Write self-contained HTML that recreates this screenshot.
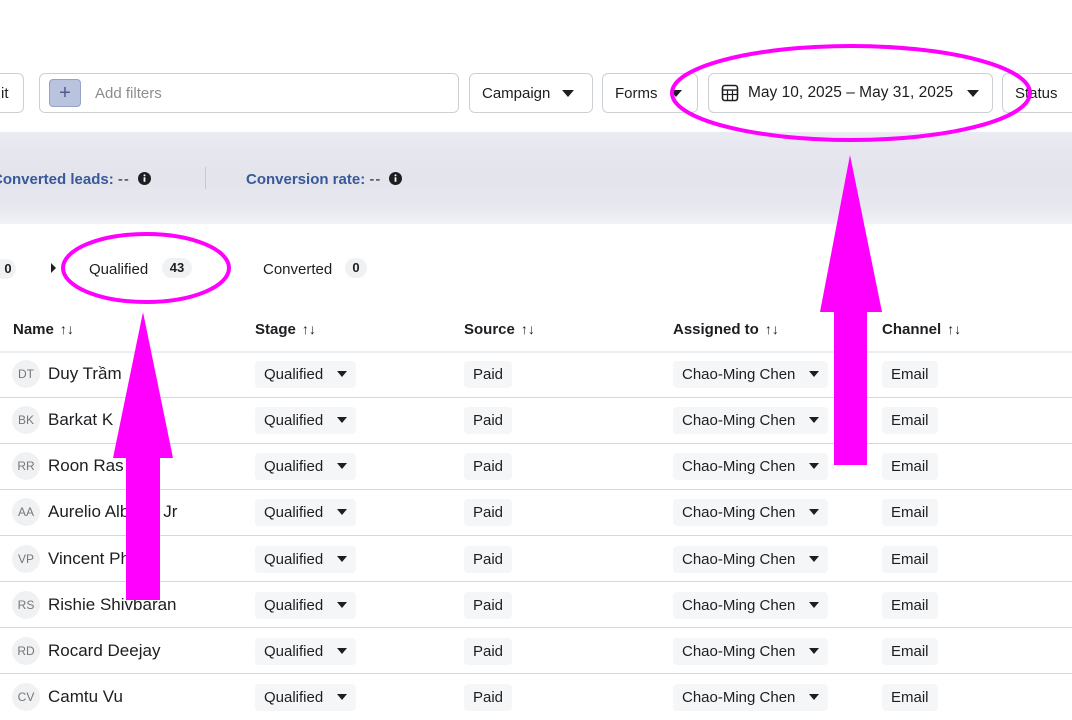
<!DOCTYPE html>
<html><head><meta charset="utf-8"><style>
*{box-sizing:border-box;margin:0;padding:0}
body{width:1072px;height:701px;overflow:hidden;background:#fff;font-family:"Liberation Sans",sans-serif;color:#1c1e21;position:relative}
.abs{position:absolute}
.btn{position:absolute;top:73px;height:40px;border:1px solid #ccd0d5;border-radius:6px;background:#fff;font-size:15px;color:#1c1e21;display:flex;align-items:center;padding:0 12px}
.tri{display:inline-block;width:0;height:0;border-left:6px solid transparent;border-right:6px solid transparent;border-top:7px solid #1c1e21;margin-left:12px}
.band{position:absolute;left:0;top:132px;width:1072px;height:92px;background:linear-gradient(180deg,#ebebf2 0,#e6e6ef 20%,#e3e4ec 50%,#e8e8f0 85%,#f1f1f6 100%)}
.stat{position:absolute;top:171px;font-size:15px;font-weight:bold;color:#385898}
.stat span{color:#1c1e21;font-weight:normal;letter-spacing:1px}
.stat svg{margin-left:8px;vertical-align:-1px}
.th{position:absolute;top:321px;font-size:15px;font-weight:bold}
.th i{font-style:normal;font-weight:normal;margin-left:6px;font-size:14px}
.line{position:absolute;left:0;width:1072px;height:1px;background:#d5d7da}
.row{position:absolute;left:0;width:1072px;height:46px}
.av{position:absolute;left:12px;top:9px;width:28px;height:28px;border-radius:50%;background:#f0f1f3;font-size:12px;color:#777;text-align:center;line-height:28px}
.nm{position:absolute;left:48px;top:13px;font-size:17px}
.pill{position:absolute;top:10px;height:27px;background:#f5f6f7;border-radius:4px;font-size:15px;line-height:28px;padding:0 9px}
.pill .tri{margin-left:14px;border-left-width:5px;border-right-width:5px;border-top-width:6px;vertical-align:2px}
</style></head><body>
<div class="btn" style="left:-10px;width:34px;padding-left:10px">it</div>
<div class="btn" style="left:39px;width:420px"><span style="display:inline-block;width:32px;height:28px;background:#b9c3de;border:1px solid #97a3c5;border-radius:4px;color:#4b5c8a;text-align:center;line-height:26px;font-size:20px;margin-left:-3px">+</span><span style="color:#8a8d91;margin-left:14px">Add filters</span></div>
<div class="btn" style="left:469px;width:124px">Campaign<span class="tri"></span></div>
<div class="btn" style="left:602px;width:96px">Forms<span class="tri"></span></div>
<div class="btn" style="left:708px;width:285px;font-size:15.5px">
<svg width="18" height="18" viewBox="0 0 18 18" style="margin-right:9px"><rect x="1.5" y="1.5" width="15" height="15" rx="2.5" fill="none" stroke="#1c1e21" stroke-width="1.6"/><line x1="1.5" y1="6" x2="16.5" y2="6" stroke="#1c1e21" stroke-width="1.4"/><line x1="1.5" y1="10.5" x2="16.5" y2="10.5" stroke="#1c1e21" stroke-width="1.2"/><line x1="6.5" y1="6" x2="6.5" y2="16.5" stroke="#1c1e21" stroke-width="1.2"/><line x1="11.5" y1="6" x2="11.5" y2="16.5" stroke="#1c1e21" stroke-width="1.2"/></svg>
May 10, 2025 – May 31, 2025<span class="tri" style="margin-left:14px"></span></div>
<div class="btn" style="left:1002px;width:90px">Status</div>

<div class="band"></div>
<div class="stat" style="left:-8px">Converted leads: <span>--</span><svg width="13" height="13" viewBox="0 0 13 13"><circle cx="6.5" cy="6.5" r="6.5" fill="#1c1e21"/><rect x="5.6" y="5.3" width="1.8" height="4.5" fill="#fff"/><circle cx="6.5" cy="3.4" r="1" fill="#fff"/></svg></div>
<div class="abs" style="left:205px;top:167px;width:1px;height:22px;background:#c8c9d0"></div>
<div class="stat" style="left:246px">Conversion rate: <span>--</span><svg width="13" height="13" viewBox="0 0 13 13"><circle cx="6.5" cy="6.5" r="6.5" fill="#1c1e21"/><rect x="5.6" y="5.3" width="1.8" height="4.5" fill="#fff"/><circle cx="6.5" cy="3.4" r="1" fill="#fff"/></svg></div>

<div class="abs" style="left:-6px;top:259px;width:22px;height:20px;border-radius:10px;background:#f0f1f3;font-size:13px;font-weight:bold;text-align:center;line-height:20px;padding-left:6px">0</div>
<div class="abs" style="left:51px;top:263px;width:0;height:0;border-top:5px solid transparent;border-bottom:5px solid transparent;border-left:5px solid #1c1e21"></div>
<div class="abs" style="left:89px;top:261px;font-size:15px">Qualified</div>
<div class="abs" style="left:162px;top:258px;width:30px;height:20px;border-radius:10px;background:#f0f1f3;font-size:13px;font-weight:bold;text-align:center;line-height:20px">43</div>
<div class="abs" style="left:263px;top:261px;font-size:15px">Converted</div>
<div class="abs" style="left:345px;top:258px;width:22px;height:20px;border-radius:10px;background:#f0f1f3;font-size:13px;font-weight:bold;text-align:center;line-height:20px">0</div>

<div class="th" style="left:13px">Name<i>↑↓</i></div>
<div class="th" style="left:255px">Stage<i>↑↓</i></div>
<div class="th" style="left:464px">Source<i>↑↓</i></div>
<div class="th" style="left:673px">Assigned to<i>↑↓</i></div>
<div class="th" style="left:882px">Channel<i>↑↓</i></div>
<div class="line" style="top:351px;background:#eceef0;height:2px"></div>

<div class="row" style="top:351px"><div class="av">DT</div><div class="nm">Duy Trầm</div><div class="pill" style="left:255px">Qualified<span class="tri"></span></div><div class="pill" style="left:464px">Paid</div><div class="pill" style="left:673px">Chao-Ming Chen<span class="tri"></span></div><div class="pill" style="left:882px">Email</div></div>
<div class="line" style="top:397px"></div>
<div class="row" style="top:397px"><div class="av">BK</div><div class="nm">Barkat K</div><div class="pill" style="left:255px">Qualified<span class="tri"></span></div><div class="pill" style="left:464px">Paid</div><div class="pill" style="left:673px">Chao-Ming Chen<span class="tri"></span></div><div class="pill" style="left:882px">Email</div></div>
<div class="line" style="top:443px"></div>
<div class="row" style="top:443px"><div class="av">RR</div><div class="nm">Roon Ras</div><div class="pill" style="left:255px">Qualified<span class="tri"></span></div><div class="pill" style="left:464px">Paid</div><div class="pill" style="left:673px">Chao-Ming Chen<span class="tri"></span></div><div class="pill" style="left:882px">Email</div></div>
<div class="line" style="top:489px"></div>
<div class="row" style="top:489px"><div class="av">AA</div><div class="nm">Aurelio Alberto Jr</div><div class="pill" style="left:255px">Qualified<span class="tri"></span></div><div class="pill" style="left:464px">Paid</div><div class="pill" style="left:673px">Chao-Ming Chen<span class="tri"></span></div><div class="pill" style="left:882px">Email</div></div>
<div class="line" style="top:535px"></div>
<div class="row" style="top:536px"><div class="av">VP</div><div class="nm">Vincent Pham</div><div class="pill" style="left:255px">Qualified<span class="tri"></span></div><div class="pill" style="left:464px">Paid</div><div class="pill" style="left:673px">Chao-Ming Chen<span class="tri"></span></div><div class="pill" style="left:882px">Email</div></div>
<div class="line" style="top:581px"></div>
<div class="row" style="top:582px"><div class="av">RS</div><div class="nm">Rishie Shivbaran</div><div class="pill" style="left:255px">Qualified<span class="tri"></span></div><div class="pill" style="left:464px">Paid</div><div class="pill" style="left:673px">Chao-Ming Chen<span class="tri"></span></div><div class="pill" style="left:882px">Email</div></div>
<div class="line" style="top:627px"></div>
<div class="row" style="top:628px"><div class="av">RD</div><div class="nm">Rocard Deejay</div><div class="pill" style="left:255px">Qualified<span class="tri"></span></div><div class="pill" style="left:464px">Paid</div><div class="pill" style="left:673px">Chao-Ming Chen<span class="tri"></span></div><div class="pill" style="left:882px">Email</div></div>
<div class="line" style="top:673px"></div>
<div class="row" style="top:674px"><div class="av">CV</div><div class="nm">Camtu Vu</div><div class="pill" style="left:255px">Qualified<span class="tri"></span></div><div class="pill" style="left:464px">Paid</div><div class="pill" style="left:673px">Chao-Ming Chen<span class="tri"></span></div><div class="pill" style="left:882px">Email</div></div>

<svg class="abs" style="left:0;top:0" width="1072" height="701">
<ellipse cx="146" cy="268" rx="83" ry="34" fill="none" stroke="#ff00ff" stroke-width="4"/>
<ellipse cx="851" cy="93" rx="179" ry="47" fill="none" stroke="#ff00ff" stroke-width="4"/>
<polygon points="143,312 173,458 160,458 160,600 126,600 126,458 113,458" fill="#ff00ff"/>
<polygon points="850,155 882,312 867,312 867,465 834,465 834,312 820,312" fill="#ff00ff"/>
</svg>
</body></html>
